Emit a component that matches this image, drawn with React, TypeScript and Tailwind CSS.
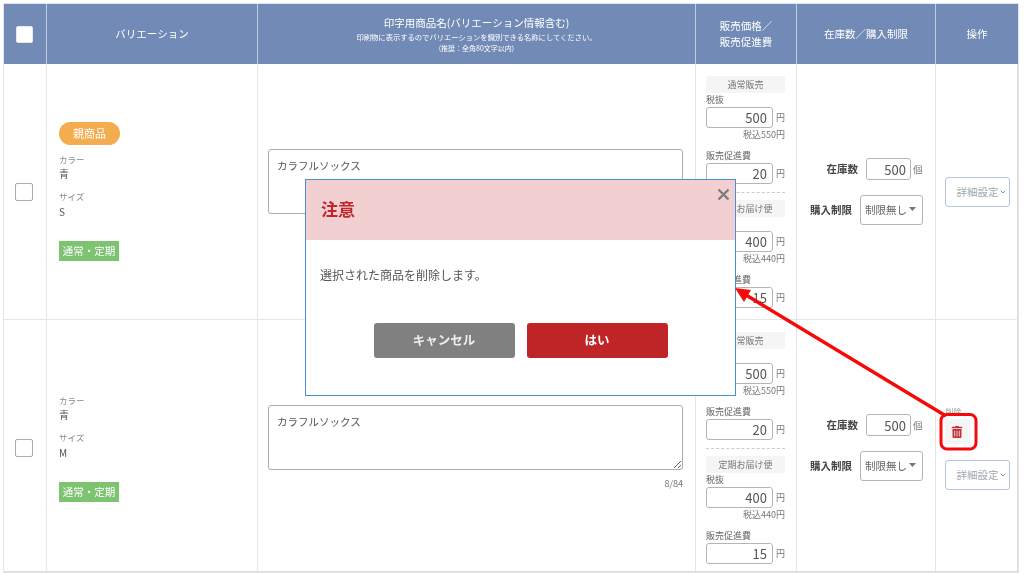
import React from "react";
import { FaTrashAlt } from "react-icons/fa";

const FONT = "font-['Noto_Sans_CJK_JP','Noto_Sans',sans-serif]";

function MoneyField({ label, value, tax }: { label: string; value: string; tax?: string }) {
  return (
    <div className="flex flex-col">
      <div className="h-[14px] text-[9px] leading-[14px] text-[#666]">{label}</div>
      <div className="flex h-[21px] items-center gap-[3px]">
        <input
          readOnly
          value={value}
          className="h-[21px] w-[67px] rounded-[3px] border border-[#b5b5b5] bg-white px-[5px] text-right text-[13px] text-[#555] outline-none"
        />
        <span className="text-[9px] text-[#777]">円</span>
      </div>
      {tax && <div className="h-[14px] text-right text-[9px] leading-[14px] text-[#777]">{tax}</div>}
    </div>
  );
}

function SectionLabel({ children }: { children: React.ReactNode }) {
  return (
    <div className="flex h-[17px] items-center justify-center bg-[#f5f5f5] text-[9px] text-[#777]">{children}</div>
  );
}

function PriceCell({ a, b, c, d }: { a: string; b: string; c: string; d: string }) {
  return (
    <div className="flex flex-col border-r border-[#e6e6e8] pl-[10px] pr-[11px] pt-[12px]">
      <SectionLabel>通常販売</SectionLabel>
      <MoneyField label="税抜" value={a} tax={b} />
      <div className="mt-[7px]">
        <MoneyField label="販売促進費" value="20" />
      </div>
      <div className="mb-[7px] mt-[8px] border-t border-dashed border-[#ccc]" />
      <SectionLabel>定期お届け便</SectionLabel>
      <MoneyField label="税抜" value={c} tax={d} />
      <div className="mt-[7px]">
        <MoneyField label="販売促進費" value="15" />
      </div>
    </div>
  );
}

function Check({ white }: { white?: boolean }) {
  return (
    <div
      className={`rounded-[2px] border ${white ? "mr-[1px] h-[17px] w-[17px] border-[#e8e8e8] bg-white" : "mr-[2px] h-[18px] w-[18px] border-[#aaa] bg-white"}`}
    />
  );
}

function VariationCell({ size, parent, low }: { size: string; parent?: boolean; low?: boolean }) {
  return (
    <div className={`flex flex-col justify-center border-r border-[#e6e6e8] pl-[12px] ${low ? "pt-[4px]" : ""}`}>
      {parent && (
        <div className="mb-[7px] flex h-[23px] w-[61px] items-center justify-center rounded-full bg-[#f3ad4e] text-[11px] text-white">
          親商品
        </div>
      )}
      <div className="text-[8.5px] leading-[14px] text-[#888]">カラー</div>
      <div className="text-[10px] leading-[15px] text-[#555]">青</div>
      <div className="mt-[8px] text-[8.5px] leading-[14px] text-[#888]">サイズ</div>
      <div className="pt-[1px] text-[10px] leading-[15px] text-[#555]">{size}</div>
      <div className="mt-[22px] flex h-[20px] w-[60px] items-center justify-center bg-[#7dc372] text-[10.5px] text-white">
        通常・定期
      </div>
    </div>
  );
}

function NameCell({ low }: { low?: boolean }) {
  return (
    <div className={`flex flex-col justify-center border-r border-[#e6e6e8] pl-[10px] pr-[12px] ${low ? "pt-[4px]" : ""}`}>
      <textarea
        readOnly
        defaultValue="カラフルソックス"
        className="h-[65px] w-full rounded-[3px] border border-[#aaa] bg-white px-[8px] py-[8px] text-[10.5px] leading-[16px] text-[#555] outline-none"
      />
      <div className="mt-[6px] h-[15px] text-right text-[9px] leading-[15px] text-[#777]">8/84</div>
    </div>
  );
}

function StockCell({ low }: { low?: boolean }) {
  return (
    <div className={`flex flex-col items-end justify-center gap-[15px] border-r border-[#e6e6e8] pr-[12px] ${low ? "pt-[4px]" : ""}`}>
      <div className="flex items-center">
        <span className="mr-[8px] text-[10.5px] font-bold text-[#444]">在庫数</span>
        <input
          readOnly
          value="500"
          className="h-[22px] w-[45px] rounded-[3px] border border-[#b5b5b5] bg-white px-[4px] text-right text-[13px] text-[#555] outline-none"
        />
        <span className="ml-[2px] w-[10px] text-[9.5px] text-[#777]">個</span>
      </div>
      <div className="flex items-center">
        <span className="mr-[8px] text-[10.5px] font-bold text-[#444]">購入制限</span>
        <div className="flex h-[30px] w-[63px] items-center gap-[2px] rounded-[3px] border border-[#b5b5b5] bg-white pl-[4px] text-[10.5px] text-[#666]">
          制限無し
          <svg width="7" height="4" viewBox="0 0 7 4" className="mb-[2px] shrink-0">
            <path d="M0 0h7L3.5 4z" fill="#777" />
          </svg>
        </div>
      </div>
    </div>
  );
}

function DetailButton() {
  return (
    <div className="flex h-[30px] w-[65px] items-center justify-center gap-[1px] rounded-[3px] border border-[#b6c6e0] bg-white pl-[8px] text-[10.5px] text-[#a5a9b0]">
      詳細設定
      <svg width="6" height="4" viewBox="0 0 6 4" className="shrink-0">
        <path d="M0.7 0.7L3 3l2.3-2.3" fill="none" stroke="#8a8f98" strokeWidth="1" />
      </svg>
    </div>
  );
}

function HeaderCell({ children, last }: { children: React.ReactNode; last?: boolean }) {
  return (
    <div
      className={`flex flex-col items-center justify-center bg-[#728ab6] text-center text-white ${last ? "" : "border-r border-[#c3cde0]"}`}
    >
      {children}
    </div>
  );
}

export default function App() {
  return (
    <div className={`relative h-[574px] w-[1024px] overflow-hidden bg-white pl-[4px] pt-[4px] ${FONT}`}>
      <div className="grid w-[1014px] grid-cols-[43px_211px_438px_101px_139px_82px] grid-rows-[60px_256px_251px] border-b border-r border-[#dcdcde] [outline:1px_solid_#e4e4e6] blur-[0.35px]">
        <HeaderCell>
          <Check white />
        </HeaderCell>
        <HeaderCell>
          <span className="text-[10.5px]">バリエーション</span>
        </HeaderCell>
        <HeaderCell>
          <span className="pb-[2px] text-[10.5px] leading-[15px]">印字用商品名(バリエーション情報含む)</span>
          <span className="text-[7.3px] leading-[11px]">印刷物に表示するのでバリエーションを識別できる名称にしてください。</span>
          <span className="text-[7px] leading-[11px]">(推奨：全角80文字以内)</span>
        </HeaderCell>
        <HeaderCell>
          <span className="text-[10.5px] leading-[16px]">販売価格／</span>
          <span className="text-[10.5px] leading-[16px]">販売促進費</span>
        </HeaderCell>
        <HeaderCell>
          <span className="text-[10.5px]">在庫数／購入制限</span>
        </HeaderCell>
        <HeaderCell last>
          <span className="text-[10.5px]">操作</span>
        </HeaderCell>

        <div className="flex items-center justify-center border-b border-r border-[#e6e6e8]">
          <Check />
        </div>
        <div className="grid border-b border-[#e6e6e8]">
          <VariationCell size="S" parent />
        </div>
        <div className="grid border-b border-[#e6e6e8]">
          <NameCell />
        </div>
        <div className="grid border-b border-[#e6e6e8]">
          <PriceCell a="500" b="税込550円" c="400" d="税込440円" />
        </div>
        <div className="grid border-b border-[#e6e6e8]">
          <StockCell />
        </div>
        <div className="flex items-center justify-center border-b border-[#e6e6e8]">
          <DetailButton />
        </div>

        <div className="flex items-center justify-center border-r border-[#e6e6e8] pt-[4px]">
          <Check />
        </div>
        <VariationCell size="M" low />
        <NameCell low />
        <PriceCell a="500" b="税込550円" c="400" d="税込440円" />
        <StockCell low />
        <div className="flex flex-col items-center justify-center pt-[5px]">
          <div className="flex w-[65px] flex-col items-start">
            <span className="pl-[1px] text-[8px] leading-[12px] text-[#999]">削除</span>
            <div className="mt-[1px] flex h-[25px] w-[25px] items-center justify-center rounded-[2px] bg-[#f5f5f5]">
              <FaTrashAlt className="text-[12px] text-[#c0343a]" />
            </div>
            <div className="mt-[16px]">
              <DetailButton />
            </div>
          </div>
        </div>
      </div>

      <div className="absolute left-[305px] top-[179px] flex h-[217px] w-[431px] flex-col border border-[#4a90d0] bg-white blur-[0.35px]">
        <div className="relative flex h-[60px] items-center bg-[#f2d0d2] pb-[3px] pl-[15px] text-[17px] font-bold text-[#c0262a]">
          注意
          <svg width="13" height="13" viewBox="0 0 13 13" className="absolute right-[5px] top-[8px]">
            <path d="M1.5 1.5l10 10M11.5 1.5l-10 10" stroke="#7d7d7d" strokeWidth="2.4" />
          </svg>
        </div>
        <div className="flex h-[83px] items-start pl-[14px] pt-[26px] text-[12px] leading-[18px] text-[#555]">
          選択された商品を削除します。
        </div>
        <div className="flex justify-center gap-[12px]">
          <div className="flex h-[35px] w-[141px] items-center justify-center rounded-[3px] bg-[#808080] text-[12.5px] font-bold text-[#eee]">
            キャンセル
          </div>
          <div className="flex h-[35px] w-[141px] items-center justify-center rounded-[3px] bg-[#bf2527] text-[12.5px] font-bold text-white">
            はい
          </div>
        </div>
      </div>

      <svg width="1024" height="574" viewBox="0 0 1024 574" className="pointer-events-none absolute left-0 top-0">
        <path d="M946 416L746 295" stroke="#f50a0a" strokeWidth="3.5" fill="none" />
        <path d="M735 288L751 290L744 302z" fill="#f50a0a" />
        <rect x="941" y="414.5" width="35" height="34.5" rx="6" fill="none" stroke="#f50a0a" strokeWidth="3" />
      </svg>
    </div>
  );
}
